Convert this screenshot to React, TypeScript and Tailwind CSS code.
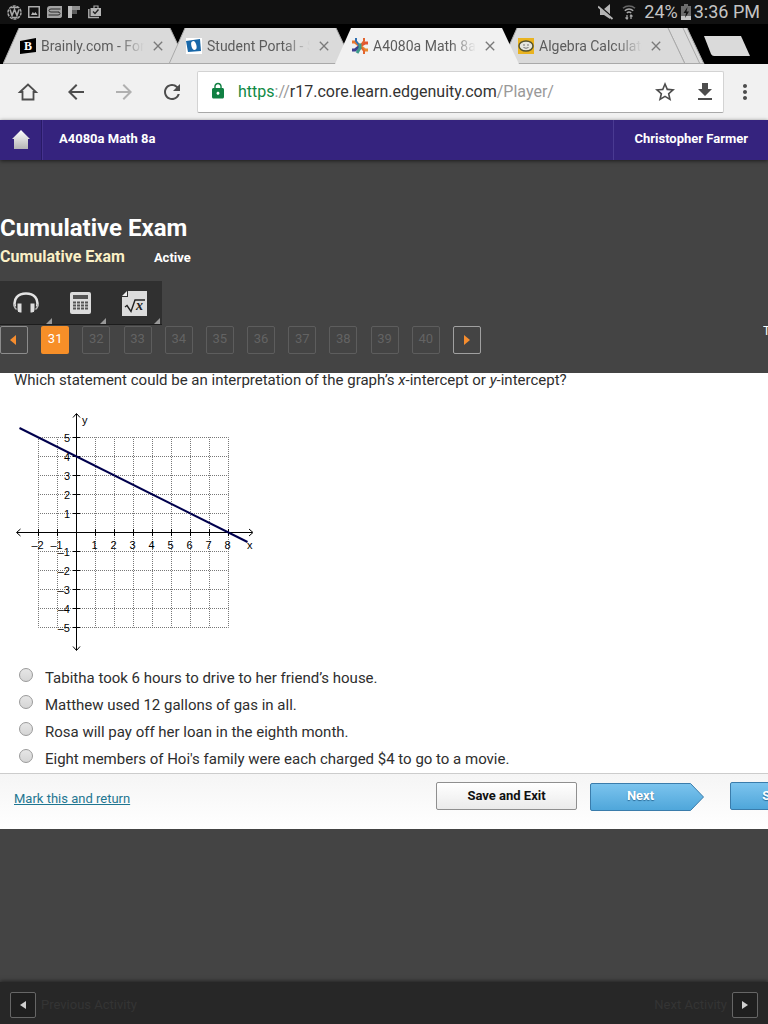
import type { ReactNode } from 'react';
import { MdArrowBack, MdArrowForward, MdClose, MdFileDownload, MdLock, MdMoreVert, MdRefresh, MdStarBorder } from 'react-icons/md';

const questions = [31, 32, 33, 34, 35, 36, 37, 38, 39, 40];

const answers = [
  'Tabitha took 6 hours to drive to her friend’s house.',
  'Matthew used 12 gallons of gas in all.',
  'Rosa will pay off her loan in the eighth month.',
  "Eight members of Hoi's family were each charged $4 to go to a movie.",
];

function StatusBar() {
  return (
    <div className="flex h-6 items-center justify-between bg-[#111111] pr-2 pl-[7px] text-[#c4c4c4]">
      <div className="flex items-center gap-[6px]">
        <svg width="15" height="15" viewBox="0 0 15 15" fill="none" stroke="#a8a8a8">
          <circle cx="7.5" cy="7.5" r="6.5" strokeWidth="1.5" strokeDasharray="3 1" />
          <path d="M3 4.5l2 6 2.5-6 2.5 6 2-6M4 2.5h7M5 12.5h5" strokeWidth="1.6" />
        </svg>
        <svg width="12" height="12" viewBox="0 0 12 12" fill="none" stroke="#b5b5b5">
          <rect x=".75" y=".75" width="10.5" height="10.5" strokeWidth="1.4" />
          <path d="M3 9l1.8-3 1.4 1.6L7.5 6 9.5 9z" fill="#b5b5b5" stroke="none" />
        </svg>
        <svg className="ml-px" width="15" height="12" viewBox="0 0 15 12" fill="none">
          <path d="M3 0h12v10q0 2-3 2H0V3q0-3 3-3z" fill="#a3a3a3" />
          <path d="M13.500 3H4q-2 0-2 1.500T4 6h7.500M1.500 9H11q2 0 2-1.500T11 6" stroke="#2a2a2a" />
        </svg>
        <svg width="12" height="12" viewBox="0 0 12 12">
          <path d="M0 0h4v12H0z" fill="#bdbdbd" />
          <path d="M4 0h8v4H4z" fill="#8f8f8f" />
          <path d="M4 4h5v4H4z" fill="#5c5c5c" />
        </svg>
        <svg className="ml-[2px]" width="14" height="14" viewBox="0 0 14 14" fill="none" stroke="#a8a8a8">
          <path d="M.8 4v8.5H11" strokeWidth="1.5" />
          <path d="M6 3V1h4v2" strokeWidth="1.2" />
          <path d="M2.5 3H13v8H2.5z" fill="#b5b5b5" stroke="none" />
          <path d="M5 6.5l2 2 3.5-4" stroke="#222" strokeWidth="1.4" />
        </svg>
      </div>
      <div className="flex items-center text-lg leading-6">
        <svg className="mr-2" width="16" height="16" viewBox="0 0 16 16">
          <path d="M2 5h4l6-5v15l-6-4H2z" fill="#b5b5b5" />
          <path d="M0 1l15 13" stroke="#111" strokeWidth="2" />
          <path d="M0 2.500l14.500 12.500" stroke="#b5b5b5" strokeWidth="1.800" />
        </svg>
        <svg className="mr-2" width="14" height="16" viewBox="0 0 14 16" fill="none" stroke="#a8a8a8" strokeWidth="1.5">
          <path d="M1 4.200a9 9 0 0 1 12 0" stroke="#666" />
          <path d="M2.800 6.700a6 6 0 0 1 8.400 0M4.800 9a3.400 3.400 0 0 1 4.400 0" />
          <path d="M5 15v-4M3.500 13.500L5 15l1-1.500M9 11v4M8 12.500L9 11l1.500 1.500" strokeWidth="1.300" />
        </svg>
        <span>24%</span>
        <svg className="mx-[3px]" width="10" height="16" viewBox="0 0 10 16">
          <path d="M3 0h4v2h3v10H0V2h3z" fill="#6b6b6b" />
          <path d="M0 12h10v4H0z" fill="#c4c4c4" />
          <path d="M6.500 3L2.500 9H5l-1 5 4-6.500H5.500z" fill="#111" />
        </svg>
        <span>3:36 PM</span>
      </div>
    </div>
  );
}

type TabProps = { icon: ReactNode; title: string; active?: boolean };

function BrowserTab({ icon, title, active }: TabProps) {
  const fill = active ? '#f1f1f1' : '#dadada';
  return (
    <div className={active ? 'relative z-10 h-9 w-[166px] shrink-0' : 'relative h-9 w-[166px] shrink-0'}>
      <svg className="absolute top-0 left-0" width="184" height="36" viewBox="0 0 184 36">
        <path d="M0 36L16 0h151l17 36z" fill={fill} />
        {!active && <path d="M0 35.500h184M0 36L16 0M167 0l17 36" stroke="#a9a9a9" fill="none" />}
      </svg>
      <div className="relative flex h-full items-center pl-[17px]">
        {icon}
        <span className="ml-[5px] w-[103px] overflow-hidden text-sm whitespace-nowrap text-[#5c5c5c] [mask-image:linear-gradient(to_right,black_75%,transparent)]">
          {title}
        </span>
        <button type="button" aria-label="Close tab" className="ml-[6px] text-[#7a7a7a]">
          <MdClose size={16} />
        </button>
      </div>
    </div>
  );
}

function TabStrip() {
  return (
    <div className="flex h-10 items-end overflow-hidden bg-black pl-[3px]">
      <BrowserTab
        title="Brainly.com - For"
        icon={
          <svg width="16" height="16" viewBox="0 0 16 16">
            <path d="M0 3l16-3v14L0 16z" fill="#000" />
            <text x="8" y="12" textAnchor="middle" fontFamily="Liberation Serif, serif" fontWeight="bold" fontSize="12" fill="#fff">B</text>
          </svg>
        }
      />
      <BrowserTab
        title="Student Portal - S"
        icon={
          <svg width="16" height="16" viewBox="0 0 16 16">
            <path d="M0 0h16v16H0z" fill="#fff" />
            <path d="M0 3l14-2 1 12-13 1z" fill="#1867a8" />
            <ellipse cx="8" cy="7.500" rx="2.500" ry="4.500" fill="#fff" transform="rotate(-15 8 8)" />
          </svg>
        }
      />
      <BrowserTab
        active
        title="A4080a Math 8a"
        icon={
          <svg width="16" height="16" viewBox="0 0 16 16" fill="none" strokeWidth="3">
            <path d="M0 4h3l5 4" stroke="#e8762d" />
            <path d="M16 5h-3L8 8" stroke="#e2542f" />
            <path d="M0 12h3l5-4" stroke="#3b3f8f" />
            <path d="M16 12h-3L8 8" stroke="#e98a2e" />
            <path d="M4 0v3l3 4" stroke="#2f6fb0" strokeWidth="2" />
            <path d="M12 0v3L9 7M12 16v-3L9 9" stroke="#e2642f" strokeWidth="2" />
            <path d="M8 5.500V11M5 15l3-5" stroke="#3d9c8a" strokeWidth="3" />
          </svg>
        }
      />
      <BrowserTab
        title="Algebra Calculato"
        icon={
          <svg width="16" height="16" viewBox="0 0 16 16">
            <path d="M0 0h16v16H0z" fill="#e9b320" />
            <ellipse cx="8" cy="8" rx="7" ry="5" fill="#e6e6df" stroke="#54532f" strokeWidth="1.500" />
            <path d="M5 7h2M9 7h2M5.500 9.500q2.500 1.500 5 0" stroke="#777" fill="none" />
          </svg>
        }
      />
      <svg className="h-9 w-[38px] shrink-0" viewBox="0 0 38 36">
        <path d="M0 0h20l17 36H0z" fill="#dadada" />
        <path d="M1 0l17 36M16 0l17 36M20 0l17 36M0 35.500h37" stroke="#a9a9a9" fill="none" />
      </svg>
      <button type="button" aria-label="New tab" className="mb-2 ml-[-1px]">
        <svg width="46" height="20" viewBox="0 0 46 20">
          <path d="M0 0h37l9 20H10Q8 20 7 18z" fill="#dadada" />
        </svg>
      </button>
    </div>
  );
}

function AddressBar() {
  return (
    <div className="flex h-14 items-center bg-[#f1f1f1] pr-[11px] pl-4 text-[#4d4d4d]">
      <div className="flex w-[181px] shrink-0 items-center gap-6">
        <button type="button" aria-label="Home">
          <svg width="24" height="24" viewBox="0 0 24 24" fill="none" stroke="currentColor" strokeWidth="1.800">
            <path d="M4 12l8-7.500L20 12h-2.500v7.500h-11V12z" />
          </svg>
        </button>
        <button type="button" aria-label="Back"><MdArrowBack size={24} /></button>
        <button type="button" aria-label="Forward" className="text-[#b0b0b0]"><MdArrowForward size={24} /></button>
        <button type="button" aria-label="Reload"><MdRefresh size={24} /></button>
      </div>
      <div className="flex h-[42px] min-w-0 flex-1 items-center rounded-xs border border-[#d3d3d3] border-b-[#a8a8a8] bg-white pr-[6px] pl-[11px]">
        <MdLock size={18} className="mb-[2px] shrink-0 text-[#108043]" />
        <a href="#player" className="ml-[11px] flex-1 truncate text-base text-[#999999]">
          <span className="text-[#0f8a45]">https</span>://<span className="text-[#333333]">r17.core.learn.edgenuity.com</span>/Player/
        </a>
        <button type="button" aria-label="Bookmark" className="mr-4"><MdStarBorder size={24} /></button>
        <button type="button" aria-label="Download"><MdFileDownload size={24} /></button>
      </div>
      <button type="button" aria-label="Menu" className="ml-[9px]"><MdMoreVert size={24} /></button>
    </div>
  );
}

function CourseHeader() {
  return (
    <header className="relative flex h-10 items-stretch bg-[#35237e] text-[13px] font-bold text-white shadow-[0_1px_4px_rgba(0,0,0,0.6)]">
      <a href="#home" aria-label="Home" className="flex w-[42px] items-center justify-center border-r border-[#281a66]">
        <svg width="18" height="20" viewBox="0 0 18 20">
          <defs>
            <linearGradient id="house" x1="0" y1="0" x2="0" y2="1">
              <stop offset="0" stopColor="#fff" />
              <stop offset="1" stopColor="#b5b5b5" />
            </linearGradient>
          </defs>
          <path d="M9 0l9 9h-2v10H2V9H0z" fill="url(#house)" />
        </svg>
      </a>
      <span className="flex flex-1 items-center border-l border-[#45338e] pb-[2px] pl-4">A4080a Math 8a</span>
      <span className="flex items-center border-l border-[#4a3a92] pr-5 pb-[2px] pl-5">Christopher Farmer</span>
    </header>
  );
}

function ToolButton({ label, children }: { label: string; children: ReactNode }) {
  return (
    <button type="button" aria-label={label} className="relative flex h-full w-[54px] items-center justify-center pt-px pr-[2px]">
      {children}
      <svg className="absolute right-[2px] bottom-0" width="6" height="6" viewBox="0 0 6 6">
        <path d="M6 0v6H0z" fill="#999" />
      </svg>
    </button>
  );
}

function Toolbar() {
  return (
    <div className="flex h-11 w-[162px] border-b border-[#1d1d1d] bg-[#303030]">
      <ToolButton label="Read aloud">
        <svg width="26" height="22" viewBox="0 0 26 22" fill="none">
          <path d="M2 14.500C0 7 5 1.500 13 1.500S26 7 24 14.500" stroke="#e4e4e4" strokeWidth="2.500" />
          <path d="M4 11h5v10H7q-3 0-3-3zM17 11h5v7q0 3-3 3h-2z" fill="#dedede" stroke="#303030" strokeWidth="1" />
          <path d="M1.500 12q-1 3 2 5.500M24.500 12q1 3-2 5.500" stroke="#bbb" strokeWidth="1.500" />
        </svg>
      </ToolButton>
      <ToolButton label="Calculator">
        <svg width="21" height="22" viewBox="0 0 21 22">
          <rect width="21" height="22" rx="2" fill="#dcdcdc" />
          <path d="M3 3h15v4H3z" fill="#555" />
          <path d="M3 10.500h15M3 13.500h15M3 16.500h15" stroke="#555" strokeWidth="2" strokeDasharray="3 1" />
        </svg>
      </ToolButton>
      <ToolButton label="Formulas">
        <svg width="25" height="25" viewBox="0 0 25 25">
          <path d="M6 0h19v25H0V6h6z" fill="#dcdcdc" />
          <path d="M5 0v5H0z" fill="#eee" />
          <path d="M3 16l2-1.500 4 6L13 9h10" stroke="#222" strokeWidth="1.400" fill="none" />
          <text x="14" y="19" fontFamily="Liberation Serif, serif" fontStyle="italic" fontWeight="bold" fontSize="14" fill="#222">x</text>
        </svg>
      </ToolButton>
    </div>
  );
}

function Pager() {
  return (
    <nav className="mt-px flex items-start justify-between">
      <div className="flex w-[481px] shrink-0 justify-between">
        <button type="button" aria-label="Previous question" className="flex size-7 items-center justify-center rounded-xs border border-[#8c8c8c] pr-[2px]">
          <svg width="6" height="10" viewBox="0 0 6 10"><path d="M6 0v10L0 5z" fill="#f68d2e" /></svg>
        </button>
        {questions.map((n) => (
          <button
            key={n}
            type="button"
            className={
              n === 31
                ? 'size-7 rounded-xs bg-[#f78f28] pb-[2px] text-[13px] text-white'
                : 'size-7 rounded-xs border border-[#5d5d5d] pb-[2px] text-[13px] text-[#636363]'
            }
          >
            {n}
          </button>
        ))}
        <button type="button" aria-label="Next question" className="flex size-7 items-center justify-center rounded-xs border border-[#a0a0a0]">
          <svg width="6" height="10" viewBox="0 0 6 10"><path d="M0 0v10l6-5z" fill="#f68d2e" /></svg>
        </button>
      </div>
      <span className="w-[5px] overflow-hidden text-xs leading-[10px] whitespace-nowrap text-white">T</span>
    </nav>
  );
}

// 19px per unit, origin at (62.5, 121.5)
const px = (x: number) => 62.5 + x * 19;
const py = (y: number) => 121.5 - y * 19;
const xs = [-2, -1, 0, 1, 2, 3, 4, 5, 6, 7, 8];
const ys = [-5, -4, -3, -2, -1, 0, 1, 2, 3, 4, 5];
const label = (n: number) => (n < 0 ? `–${-n}` : `${n}`);

function Graph() {
  return (
    <svg width="242" height="242" viewBox="0 0 242 242" fontFamily="Liberation Sans, sans-serif" fontSize="11" fill="#000">
      <g stroke="#777" strokeDasharray="1 1" strokeDashoffset="0.5">
        {xs.map((x) => <path key={x} d={`M${px(x)} ${py(5)}V${py(-5)}`} />)}
        {ys.map((y) => <path key={y} d={`M${px(-2)} ${py(y)}H${px(8)}`} />)}
      </g>
      <g stroke="#000" fill="none">
        <path d="M62.500 3v236M59 6.500l3.500-4 3.500 4M59 235.500l3.500 4 3.500-4" />
        <path d="M3 121.500h235M6.500 118l-4 3.500 4 3.500M235 118l4 3.500-4 3.500" />
        {xs.map((x) => <path key={x} d={`M${px(x)} 118v7`} />)}
        {ys.map((y) => <path key={y} d={`M59 ${py(y)}h7`} />)}
      </g>
      {xs.filter((x) => x !== 0).map((x) => (
        <text key={x} x={px(x) - 1} y="138" textAnchor="middle">{label(x)}</text>
      ))}
      {ys.filter((y) => y !== 0).map((y) => (
        <text key={y} x="56" y={py(y) + 4} textAnchor="end">{label(y)}</text>
      ))}
      <text x="68" y="13">y</text>
      <text x="233" y="138">x</text>
      <path d={`M${px(-3)} ${py(5.5)}L${px(9)} ${py(-0.5)}`} stroke="#00004d" strokeWidth="2" />
    </svg>
  );
}

function Question() {
  return (
    <form className="bg-white text-[15px] text-[#2e2e2e]">
      <div className="px-[14px] pb-px">
        <p className="leading-[14px]">
          Which statement could be an interpretation of the graph’s <i>x</i>-intercept or <i>y</i>-intercept?
        </p>
        <div className="mt-6"><Graph /></div>
        <div className="mt-[11px]">
          {answers.map((answer) => (
            <label key={answer} className="flex h-[27px] items-center pl-[5px]">
              <input
                type="radio"
                name="answer"
                className="mb-[5px] size-[14px] appearance-none rounded-full border border-[#9a9a9a] bg-linear-to-b from-[#e6e6e6] to-[#d5d5d5]"
              />
              <span className="ml-3 pt-[2px]">{answer}</span>
            </label>
          ))}
        </div>
      </div>
      <div className="flex h-14 items-start overflow-hidden border-t border-[#cccccc] bg-linear-to-b from-[#f5f5f5] to-white pl-[14px] text-[13px]">
        <a href="#mark" className="mt-[15px] flex-1 text-[#1f7691] underline">Mark this and return</a>
        <button type="button" className="mt-2 h-7 w-[141px] shrink-0 rounded-xs border border-[#8f8f8f] bg-linear-to-b from-white to-[#ebebeb] font-bold text-[#111111]">
          Save and Exit
        </button>
        <button type="button" className="relative mt-[9px] ml-[13px] h-7 w-[114px] shrink-0 pr-[13px] pb-[2px] font-bold text-white [text-shadow:0_1px_1px_#2b6a96]">
          <svg className="absolute inset-0" width="114" height="28" viewBox="0 0 114 28">
            <defs>
              <linearGradient id="next" x1="0" y1="0" x2="0" y2="1">
                <stop offset="0" stopColor="#7cc4ee" />
                <stop offset="1" stopColor="#4ea6da" />
              </linearGradient>
            </defs>
            <path d="M2 .5h98.500l13 13.500-13 13.500H2Q.5 27.500.5 26V2Q.5.500 2 .500z" fill="url(#next)" stroke="#3a7cab" />
          </svg>
          <span className="relative">Next</span>
        </button>
        <div className="ml-[26px] w-[38px] shrink-0 overflow-hidden">
          <button type="button" className="mt-2 h-7 w-[106px] rounded-xs border border-[#3a7cab] bg-linear-to-b from-[#7cc4ee] to-[#4ea6da] font-bold text-white [text-shadow:0_1px_1px_#2b6a96]">
            Submit
          </button>
        </div>
      </div>
    </form>
  );
}

function ActivityFooter() {
  return (
    <footer className="mt-auto flex h-[42px] items-center justify-between bg-[#272727] px-[10px] pt-1 text-[13px] text-[#343434] shadow-[0_-1px_4px_rgba(0,0,0,0.5)]">
      <button type="button" className="flex items-center gap-[5px]">
        <span className="flex size-[26px] items-center justify-center rounded-xs border border-[#666666] bg-[#1f1f1f]">
          <svg width="6" height="8" viewBox="0 0 6 8"><path d="M6 0v8L0 4z" fill="#d0d0d0" /></svg>
        </span>
        Previous Activity
      </button>
      <button type="button" className="flex items-center gap-[5px]">
        Next Activity
        <span className="flex size-[26px] items-center justify-center rounded-xs border border-[#666666] bg-[#1f1f1f]">
          <svg width="6" height="8" viewBox="0 0 6 8"><path d="M0 0v8l6-4z" fill="#d0d0d0" /></svg>
        </span>
      </button>
    </footer>
  );
}

export default function App() {
  return (
    <div className="flex min-h-screen flex-col overflow-hidden bg-[#444444] font-[Roboto,sans-serif]">
      <StatusBar />
      <TabStrip />
      <AddressBar />
      <CourseHeader />
      <main>
        <div className="pt-[52px]">
          <h1 className="text-2xl leading-8 font-bold text-white">Cumulative Exam</h1>
          <div className="flex items-baseline gap-[29px] pt-px font-bold">
            <h2 className="text-base leading-6 text-[#fbf0c6]">Cumulative Exam</h2>
            <span className="text-[13px] text-white">Active</span>
          </div>
        </div>
        <div className="mt-3 mb-[19px]">
          <Toolbar />
          <Pager />
        </div>
        <Question />
      </main>
      <ActivityFooter />
    </div>
  );
}
